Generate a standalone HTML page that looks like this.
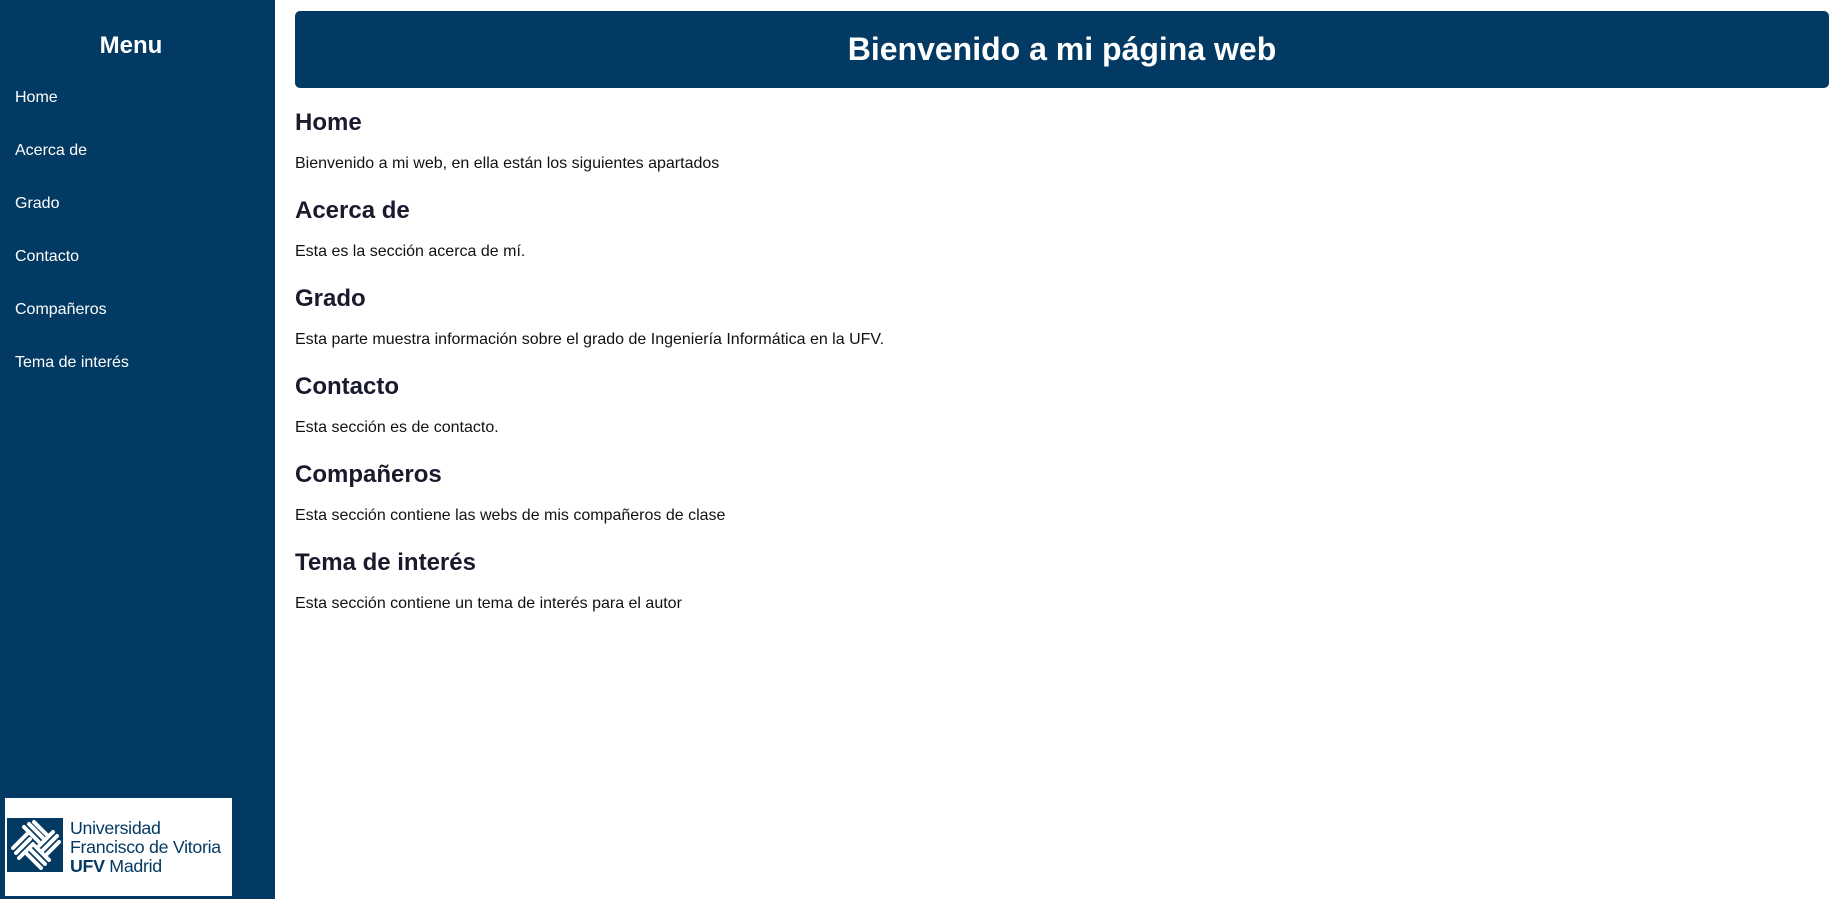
<!DOCTYPE html>
<html><head><meta charset="utf-8"><style>
*{margin:0;padding:0;box-sizing:border-box}
body{width:1835px;height:899px;overflow:hidden;background:#fff;font-family:"Liberation Sans",Arial,sans-serif;position:relative}
.side{position:absolute;left:0;top:0;width:275px;height:899px;background:#033a63;color:#fff}
.side h1{position:absolute;top:31px;left:0;width:262px;text-align:center;font-size:24px;font-weight:bold;line-height:30px}
.side a{position:absolute;left:15px;color:#fff;text-decoration:none;font-size:16px;line-height:20px}
.hdr{position:absolute;left:295px;top:11px;width:1534px;height:77px;background:#033a63;border-radius:5px;color:#fff;text-align:center;font-size:32px;font-weight:bold;line-height:77px}
.sec{position:absolute;left:295px;width:1500px;color:#1a1a2e}
.sec h2{font-size:24px;line-height:30px;font-weight:bold}
.sec p{margin-top:16px;font-size:16px;line-height:20px;color:#111}
.logo{position:absolute;left:5px;top:798px;width:227px;height:98px;background:#fff}
.logo .t{position:absolute;left:65px;top:21px;color:#033a63;font-size:17.8px;line-height:19px;letter-spacing:-0.3px}
</style></head><body>
<div class="side">
<h1>Menu</h1>
<a style="top:88px">Home</a>
<a style="top:141px">Acerca de</a>
<a style="top:194px">Grado</a>
<a style="top:247px">Contacto</a>
<a style="top:300px">Compañeros</a>
<a style="top:353px">Tema de interés</a>
<div class="logo">
<svg style="position:absolute;left:2px;top:20px" width="56" height="54" viewBox="0 0 56 54"><rect width="56" height="54" fill="#033a63"/>
<g stroke="#fff" stroke-width="4" stroke-linecap="round">
<line x1="22" y1="6" x2="36" y2="20"/><line x1="27" y1="4" x2="40" y2="17"/><line x1="17" y1="9" x2="32" y2="24"/>
<line x1="6" y1="30" x2="20" y2="16"/><line x1="9" y1="35" x2="23" y2="21"/><line x1="12" y1="40" x2="26" y2="26"/>
<line x1="20" y1="36" x2="34" y2="50"/><line x1="24" y1="32" x2="38" y2="46"/><line x1="28" y1="28" x2="42" y2="42"/>
<line x1="36" y1="32" x2="50" y2="18"/><line x1="32" y1="28" x2="46" y2="14"/><line x1="40" y1="36" x2="52" y2="24"/>
</g></svg>
<div class="t">Universidad<br>Francisco de Vitoria<br><b>UFV</b> Madrid</div>
</div>
</div>
<div class="hdr">Bienvenido a mi página web</div>
<div class="sec" style="top:108px"><h2>Home</h2><p>Bienvenido a mi web, en ella están los siguientes apartados</p></div>
<div class="sec" style="top:196px"><h2>Acerca de</h2><p>Esta es la sección acerca de mí.</p></div>
<div class="sec" style="top:284px"><h2>Grado</h2><p>Esta parte muestra información sobre el grado de Ingeniería Informática en la UFV.</p></div>
<div class="sec" style="top:372px"><h2>Contacto</h2><p>Esta sección es de contacto.</p></div>
<div class="sec" style="top:460px"><h2>Compañeros</h2><p>Esta sección contiene las webs de mis compañeros de clase</p></div>
<div class="sec" style="top:548px"><h2>Tema de interés</h2><p>Esta sección contiene un tema de interés para el autor</p></div>
</body></html>
